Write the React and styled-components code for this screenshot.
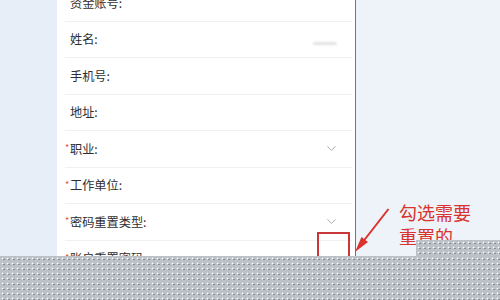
import React from "react";
import styled, { createGlobalStyle } from "styled-components";
import { ChevronDown } from "lucide-react";

const Global = createGlobalStyle`
  html, body {
    margin: 0;
    padding: 0;
    overflow: hidden;
  }
  body {
    font-family: "Noto Sans CJK SC", "Noto Sans", sans-serif;
  }
`;

const Screen = styled.div`
  position: relative;
  width: 500px;
  height: 300px;
  display: flex;
  overflow: hidden;
  background: #eef2f9;
`;

const SideStrip = styled.div`
  width: 57px;
  flex-shrink: 0;
  background: #e8eef8;
`;

const Panel = styled.div`
  width: 298px;
  flex-shrink: 0;
  background: #fff;
  border-right: 1px solid #6d7978;
  overflow: hidden;
`;

const Rows = styled.div`
  margin-top: -15px;
  padding-left: 8px;
  padding-right: 3px;
`;

const Row = styled.div`
  height: 35.5px;
  display: flex;
  align-items: center;
  border-bottom: 1px solid #eff1f4;
  padding-left: ${(p) => (p.$required ? "0" : "5px")};
  padding-right: 9px;
`;

const Star = styled.span`
  color: #e0504a;
  font-size: 9px;
  width: 4px;
  margin-right: 1px;
  line-height: 1;
  transform: translateY(-1px);
`;

const Label = styled.span`
  flex: 1;
  font-size: 12.2px;
  color: #2e2e2e;
`;

const Masked = styled.span`
  width: 24px;
  height: 3px;
  margin-right: 6px;
  border-radius: 2px;
  background: #e2e2e2;
  filter: blur(0.8px);
  transform: translateY(4px);
`;

const Chevron = styled(ChevronDown)`
  color: #a3a3a3;
  margin-right: 4px;
`;

const RightArea = styled.div`
  flex: 1;
`;

const Note = styled.div`
  position: absolute;
  left: 399px;
  top: 200px;
  font-size: 18px;
  line-height: 24px;
  color: #d8332c;
`;

const Highlight = styled.div`
  position: absolute;
  left: 317px;
  top: 232px;
  width: 29px;
  height: 40px;
  border: 2px solid #c8383a;
`;

const Arrow = styled.svg`
  position: absolute;
  left: 350px;
  top: 200px;
`;

const Mosaic = styled.div`
  position: absolute;
  left: ${(p) => p.$left}px;
  top: ${(p) => p.$top}px;
  width: ${(p) => p.$width}px;
  height: ${(p) => p.$height}px;
  background-color: #bcc1c8;
  background-image: radial-gradient(circle, #ffffff 0.7px, transparent 1.1px),
    radial-gradient(circle, #55595f 0.5px, transparent 0.9px);
  background-size: 5px 5px, 5px 5px;
  background-position: 0 0, 1.5px 1px;
`;

const fields = [
  { label: "资金账号:" },
  { label: "姓名:", masked: true },
  { label: "手机号:" },
  { label: "地址:" },
  { label: "职业:", required: true, select: true },
  { label: "工作单位:", required: true },
  { label: "密码重置类型:", required: true, select: true },
  { label: "账户重置密码:", required: true },
];

export default function App() {
  return (
    <>
      <Global />
      <Screen>
        <SideStrip />
        <Panel>
          <Rows>
            {fields.map((f) => (
              <Row key={f.label} $required={f.required}>
                {f.required && <Star>*</Star>}
                <Label>{f.label}</Label>
                {f.masked && <Masked />}
                {f.select && <Chevron size={15} strokeWidth={1.5} />}
              </Row>
            ))}
          </Rows>
        </Panel>
        <RightArea />

        <Highlight />
        <Arrow width="45" height="60" viewBox="0 0 45 60">
          <line x1="38.5" y1="9" x2="12" y2="43" stroke="#d8332c" strokeWidth="2" />
          <polygon points="5,52 18,42 11.5,37" fill="#d8332c" />
        </Arrow>
        <Note>
          <div>勾选需要</div>
          <div>重置的</div>
        </Note>

        <Mosaic $left={416} $top={240} $width={84} $height={16} />
        <Mosaic $left={0} $top={256} $width={500} $height={44} />
      </Screen>
    </>
  );
}
